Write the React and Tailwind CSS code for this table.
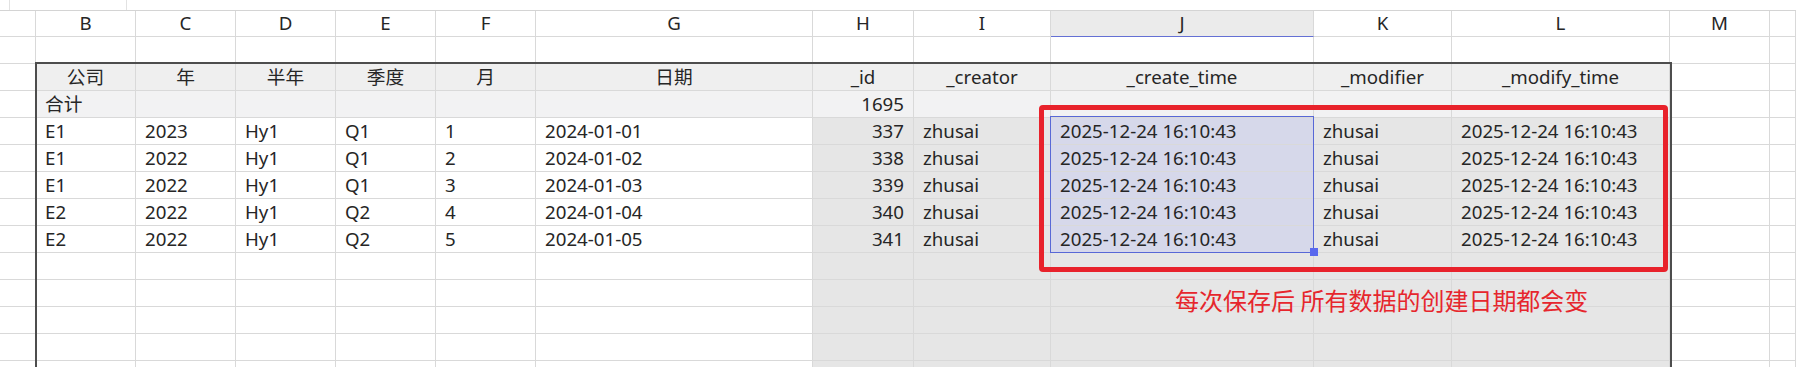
import React from "react";

// Column tracks: narrow lead column, B..L, M, and the rest of N
const GRID =
  "grid grid-cols-[36px_100px_100px_100px_100px_100px_277px_101px_137px_263px_138px_218px_100px_1fr]";

const LETTERS = ["", "B", "C", "D", "E", "F", "G", "H", "I", "J", "K", "L", "M", ""];

const HEADERS = ["公司", "年", "半年", "季度", "月", "日期", "_id", "_creator", "_create_time", "_modifier", "_modify_time"];

const STAMP = "2025-12-24 16:10:43";
const DATA = [
  ["E1", "2023", "Hy1", "Q1", "1", "2024-01-01", "337", "zhusai", STAMP, "zhusai", STAMP],
  ["E1", "2022", "Hy1", "Q1", "2", "2024-01-02", "338", "zhusai", STAMP, "zhusai", STAMP],
  ["E1", "2022", "Hy1", "Q1", "3", "2024-01-03", "339", "zhusai", STAMP, "zhusai", STAMP],
  ["E2", "2022", "Hy1", "Q2", "4", "2024-01-04", "340", "zhusai", STAMP, "zhusai", STAMP],
  ["E2", "2022", "Hy1", "Q2", "5", "2024-01-05", "341", "zhusai", STAMP, "zhusai", STAMP],
];

const FONT = { fontFamily: '"Noto Sans", "Noto Sans CJK SC", sans-serif' };

function Cell({ children, fill, align = "left" }) {
  const alignCls =
    align === "center" ? "justify-center" : align === "right" ? "justify-end" : "justify-start";
  return (
    <div
      className={`h-[27px] border-r border-b border-[#d9d9d9] px-[9px] flex items-center whitespace-nowrap overflow-hidden ${alignCls} ${fill}`}
    >
      {children}
    </div>
  );
}

// kind: "blank" | "head" | "total" | "data" | "tail"
function SheetRow({ kind, values = [] }) {
  return (
    <div className={GRID}>
      {LETTERS.map((_, c) => {
        const inTable = c >= 1 && c <= 11;
        const sysCol = c >= 7 && c <= 11;
        let fill = "bg-white";
        if (kind === "head" && inTable) fill = "bg-[#efefef]";
        else if (kind === "total" && inTable) fill = "bg-[#f2f2f3]";
        else if ((kind === "data" || kind === "tail") && sysCol) fill = "bg-[#e6e6e6]";
        if (kind === "data" && c === 9) fill = "bg-[#d6d8ea]";

        let text = null;
        let align = "left";
        if (kind === "head" && inTable) {
          text = HEADERS[c - 1];
          align = "center";
        } else if (kind === "total") {
          if (c === 1) text = "合计";
          if (c === 7) {
            text = "1695";
            align = "right";
          }
        } else if (kind === "data" && inTable) {
          text = values[c - 1];
          if (c === 7) align = "right";
        }
        return (
          <Cell key={c} fill={fill} align={align}>
            {text}
          </Cell>
        );
      })}
    </div>
  );
}

export default function App() {
  return (
    <div
      className="relative w-[1796px] h-[367px] overflow-hidden bg-white text-[18.7px] text-[#262626]"
      style={FONT}
    >
      {/* strip under the formula bar with the name box edge */}
      <div className="h-[11px] border-b border-[#d4d4d4]">
        <div className="ml-[9px] w-[118px] h-full border-l border-r border-[#e2e2e2]" />
      </div>

      {/* column letters */}
      <div className={GRID}>
        {LETTERS.map((l, c) => (
          <div
            key={c}
            className={
              c === 9
                ? "h-[26px] border-r border-b border-r-[#d9d9d9] border-b-[#6470d4] bg-[#ebebeb] flex items-center justify-center"
                : "h-[26px] border-r border-b border-[#d9d9d9] flex items-center justify-center"
            }
          >
            {l}
          </div>
        ))}
      </div>

      <SheetRow kind="blank" />
      <SheetRow kind="head" />
      <SheetRow kind="total" />
      {DATA.map((r, i) => (
        <SheetRow key={i} kind="data" values={r} />
      ))}
      {[0, 1, 2, 3, 4].map((i) => (
        <SheetRow key={`t${i}`} kind="tail" />
      ))}

      {/* table outline */}
      <div className="absolute left-[35px] top-[62px] w-[1637px] h-[320px] border-2 border-b-0 border-[#4d4d4d] pointer-events-none" />

      {/* selected range on column J */}
      <div className="absolute left-[1050px] top-[116px] w-[264px] h-[137px] border border-[#5868d6] pointer-events-none" />
      <div className="absolute left-[1310px] top-[248px] w-[8px] h-[8px] bg-[#5a69ee] pointer-events-none" />

      {/* red callout box */}
      <div className="absolute left-[1039px] top-[105px] w-[629px] h-[167px] border-[5px] border-[#e8222b] rounded-[4px] pointer-events-none" />

      {/* callout note */}
      <div
        className="absolute left-[1175px] top-[288px] text-[24px] leading-[24px] text-[#e6262d] whitespace-nowrap"
        style={{ fontFamily: '"Noto Sans CJK SC", sans-serif' }}
      >
        每次保存后 所有数据的创建日期都会变
      </div>
    </div>
  );
}
